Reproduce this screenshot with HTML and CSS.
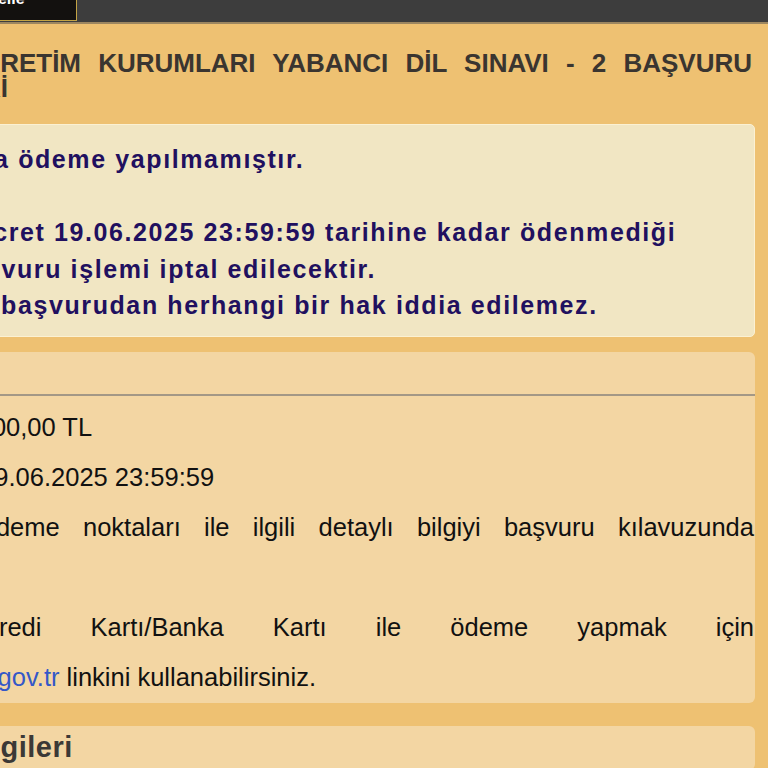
FILE: index.html
```html
<!DOCTYPE html>
<html lang="tr">
<head>
<meta charset="utf-8">
<title>Başvuru Ödeme Bilgileri</title>
<link rel="stylesheet" href="styles.css">
</head>
<body>
<div class="topbar">
  <div class="tab">Güncelle</div>
</div>
<div class="page">
  <h1 class="title">2025 YÜKSEKÖĞRETİM KURUMLARI YABANCI DİL SINAVI - 2 BAŞVURU ÖDEME BİLGİLERİ</h1>
  <div class="notice">Başvurunuza ödeme yapılmamıştır.<br><br>Sınava ait ücret 19.06.2025 23:59:59 tarihine kadar ödenmediği takdirde başvuru işlemi iptal edilecektir.<br>Ödenmeyen başvurudan herhangi bir hak iddia edilemez.</div>
  <section class="panel">
    <div class="panel-head"><h2>Ödeme Bilgileri</h2></div>
    <div class="panel-body">
      <p>Başvuru Ücreti : 1.100,00 TL</p>
      <p>Son ödeme Tarihi: 19.06.2025 23:59:59</p>
      <p class="just">Ödeme Yerleri: Ödeme noktaları ile ilgili detaylı bilgiyi başvuru kılavuzunda bulunmaktadır.</p>
      <p class="just">HATIRLATMA: Kredi Kartı/Banka Kartı ile ödeme yapmak için <a href="#">https://odeme.osym.gov.tr</a> linkini kullanabilirsiniz.</p>
    </div>
  </section>
  <section class="panel">
    <div class="panel-head"><h2>Aday İletişim Bilgileri</h2></div>
  </section>
</div>
</body>
</html>
```
FILE: styles.css
```css
html, body {
  margin: 0;
  padding: 0;
}
body {
  background: #eec172;
  font-family: "Liberation Sans", Arial, sans-serif;
  overflow: hidden;
  height: 768px;
}
.topbar {
  height: 22px;
  background: #3d3d3d;
  border-bottom: 2px solid #9c8660;
  display: flex;
  overflow: hidden;
}
.tab {
  margin-left: -60px;
  width: 137px;
  height: 21px;
  background: #13110f;
  border-right: 1px solid #c3a445;
  border-bottom: 1px solid #c3a445;
  color: #ffffff;
  font-weight: bold;
  font-size: 16px;
  line-height: 16px;
  padding-left: 17px;
  box-sizing: border-box;
  overflow: hidden;
}
.tab::before {
  content: "";
  display: block;
  margin-top: -9px;
}
.page {
  margin-left: -260px;
  width: 1015px;
}
.title {
  margin: 26.5px 3px 23.5px 0;
  padding-left: 36.8px;
  font-size: 26px;
  line-height: 25px;
  font-weight: bold;
  color: #3a3530;
  text-align: justify;
}
.notice {
  background: #f1e6c3;
  border: 1px solid #fbf1d3;
  border-radius: 5px;
  padding: 16px 12px 12px 94px;
  margin-bottom: 15px;
  color: #21105f;
  font-weight: bold;
  font-size: 25px;
  letter-spacing: 1.6px;
  line-height: 36.5px;
}
.panel {
  background: #f3d6a3;
  border-radius: 6px;
  margin-bottom: 23px;
  overflow: hidden;
}
.panel-head {
  padding: 6px 1px 6px 28px;
  border-bottom: 2px solid #a39886;
}
.panel-head h2 {
  margin: 0;
  font-size: 29px;
  line-height: 30px;
  letter-spacing: 0.5px;
  font-weight: bold;
  color: #3c3936;
}
.panel-body {
  padding: 6px 1px 1px 28px;
  font-size: 25.5px;
  line-height: 50px;
  color: #111111;
}
.panel-body p {
  margin: 0;
}
.panel-body .just {
  text-align: justify;
}
.panel-body a {
  color: #3458c8;
  text-decoration: none;
}
```
